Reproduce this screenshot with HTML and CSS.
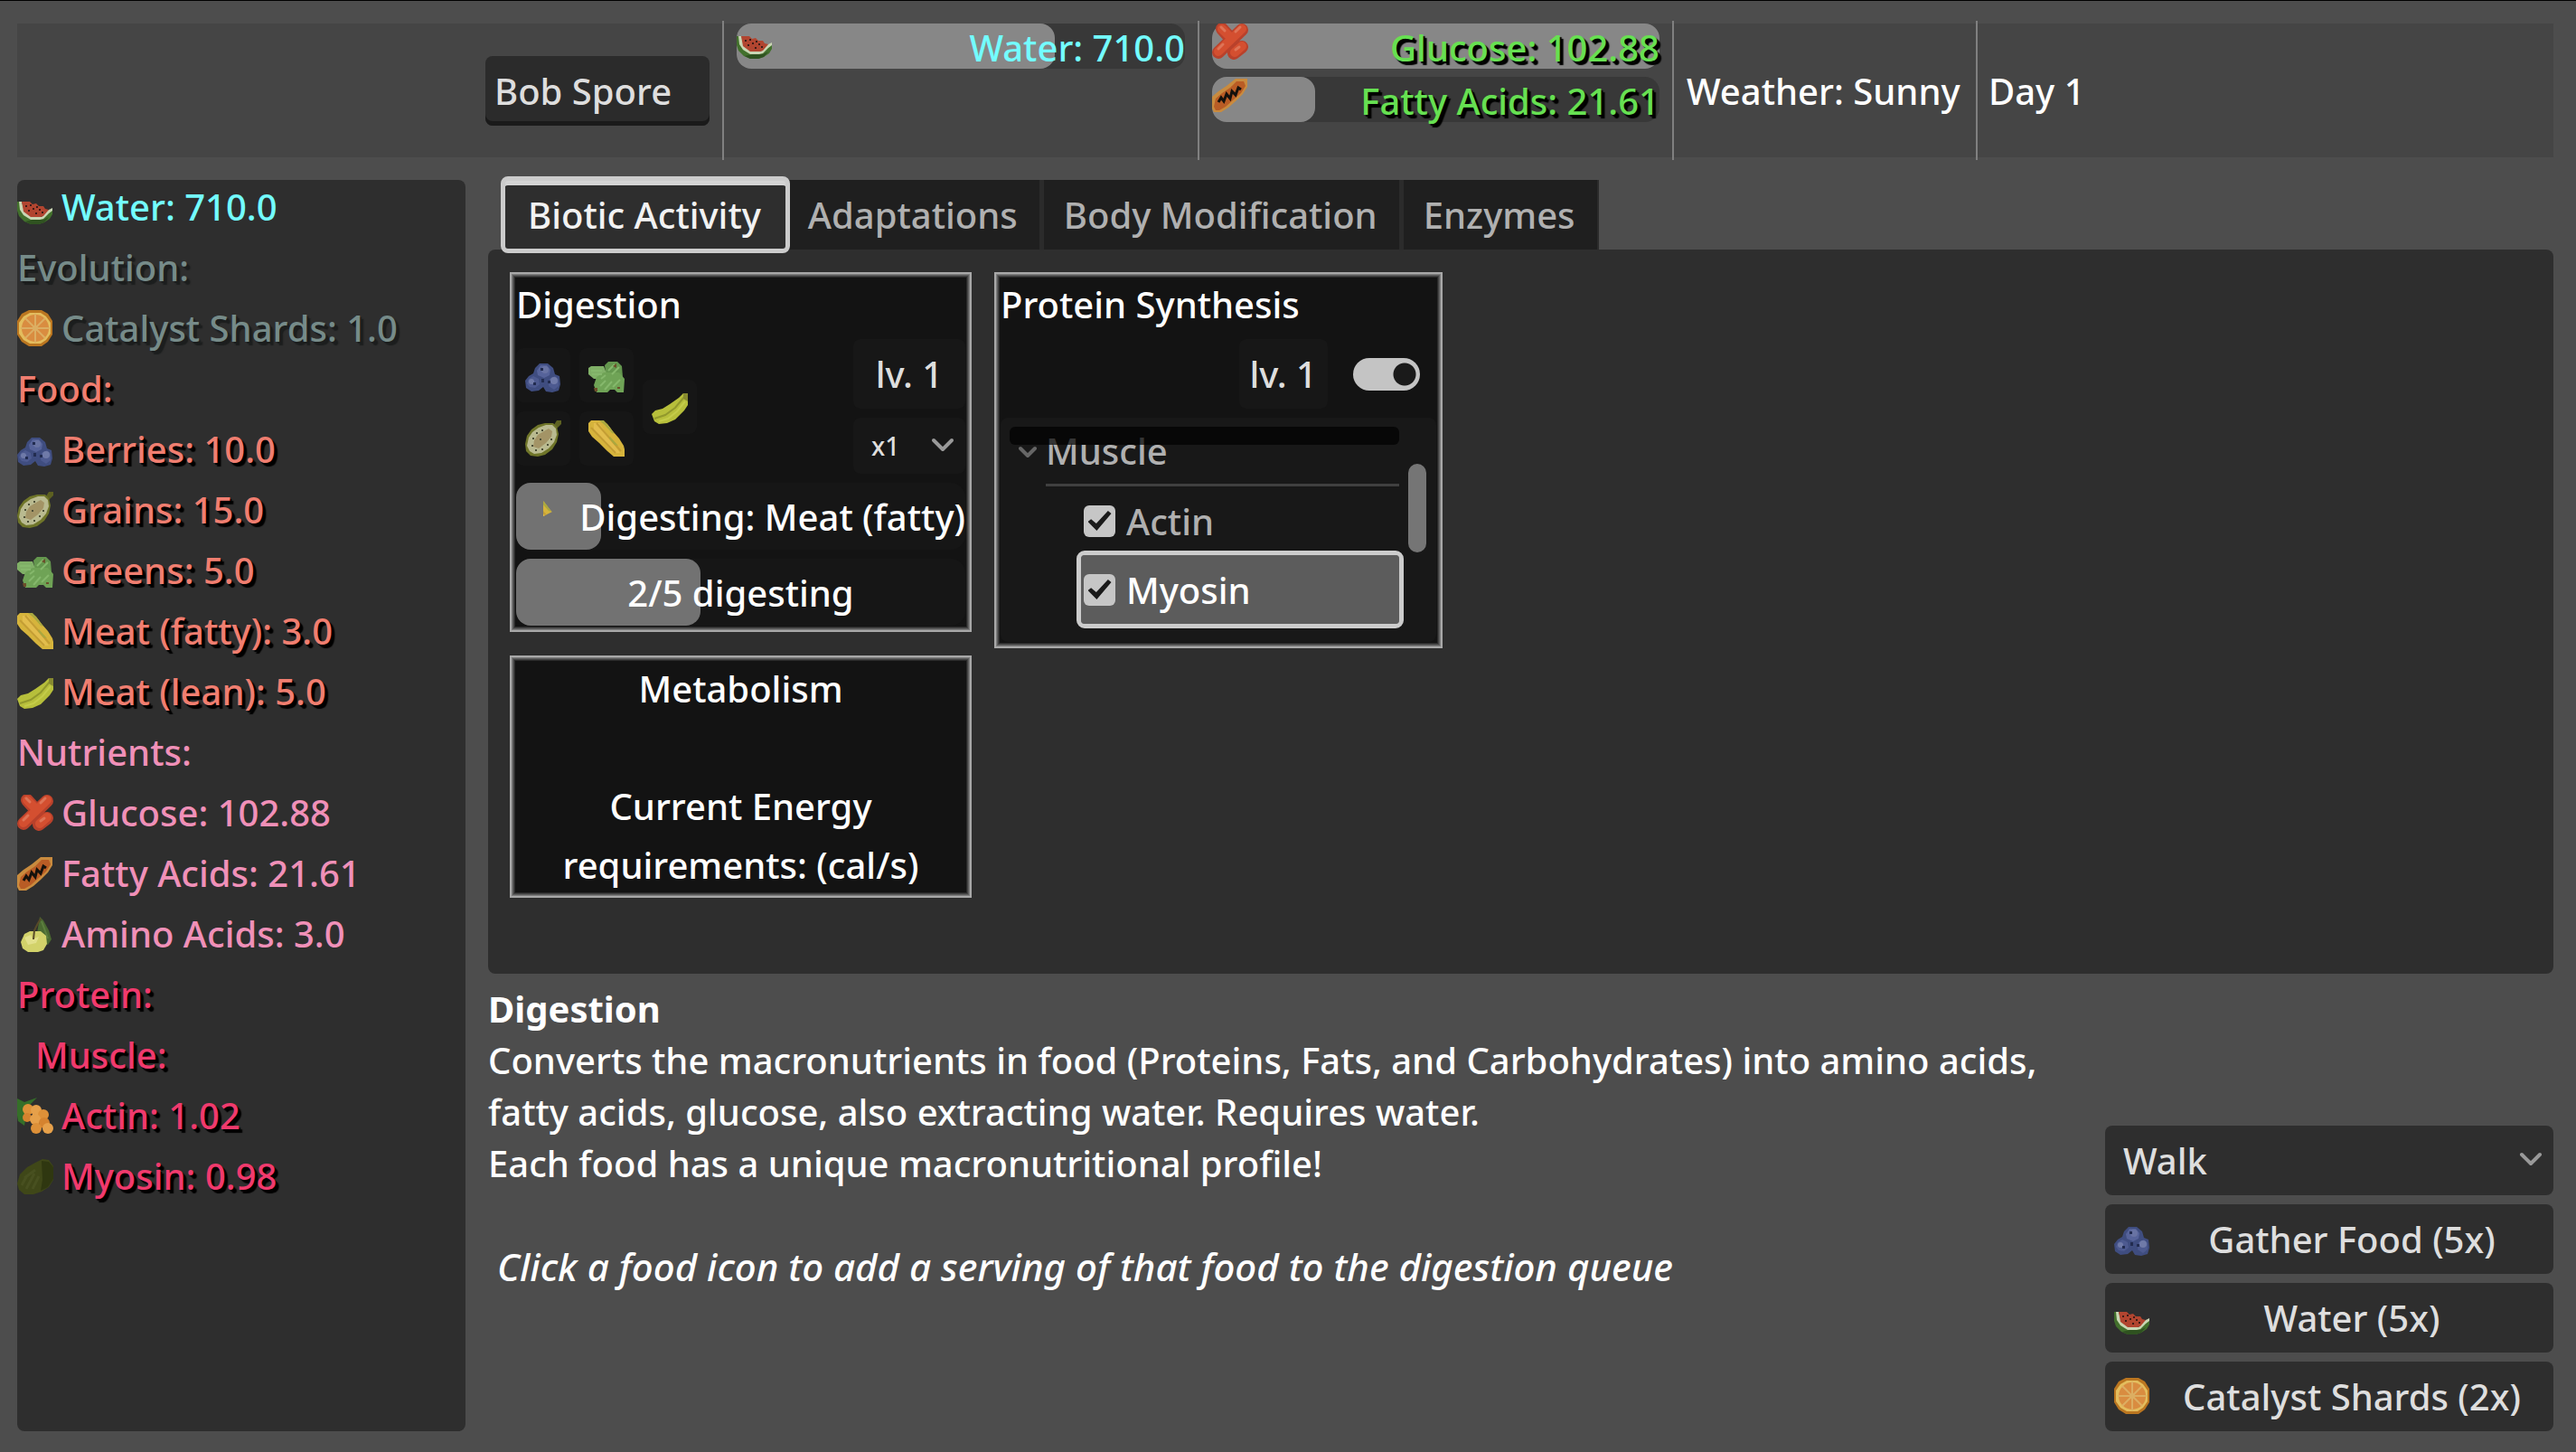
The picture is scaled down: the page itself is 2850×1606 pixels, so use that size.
FILE: index.html
```
<!DOCTYPE html>
<html lang="en">

<head>
    <meta charset="UTF-8">
    <meta name="viewport" content="width=device-width, initial-scale=1.0">
    <title>Bob Spore - Biotic Activity</title>
    <link rel="stylesheet" href="styles.css">
</head>

<body>
    <!-- Item icons -->
    <svg class="sprites" aria-hidden="true">
        <symbol id="icon-water" viewBox="0 0 40 40">
            <path d="M0 14h4l2 12 8 7h13l7-8 5-2v5l-3 5-6 4-6 2H15l-7-3-6-6-2-6z" fill="#42702c" />
            <path d="M9 36l8-2h12l6-3-5 6-6 2H15z" fill="#2f5220" />
            <path d="M2 14h3l3 11 8 6h11l6-7 6-3v3l-4 3-6 6-4 1H15l-8-5-4-6z" fill="#c9d6b4" />
            <path d="M5 14h9l3 3 4-1 3 3h5l2 3 4 1-6 7-3 1H15l-8-6z" fill="#b14530" />
            <path d="M9 18h2v2H9zM14 17h2v2h-2zM12 23h2v2h-2zM17 21h2v2h-2zM20 26h2v2h-2zM24 22h2v2h-2zM27 25h2v2h-2zM21 19h2v2h-2z" fill="#3d1c17" />
        </symbol>
        <symbol id="icon-shard" viewBox="0 0 40 40">
            <path d="M13 0h14l7 4 5 8v15l-5 8-7 5H13l-8-5-5-8V12l5-8z" fill="#bb7620" />
            <path d="M14 3h12l6 4 5 7v12l-5 7-6 4H14l-7-4-5-7V14l5-7z" fill="#e3bd5e" />
            <circle cx="20" cy="20" r="15" fill="#d98c40" />
            <path d="M20 4v32M4 20h32M9 9l22 22M31 9L9 31" stroke="#dcae62" stroke-width="2" />
            <circle cx="20" cy="20" r="3" fill="#dcae62" />
        </symbol>
        <symbol id="icon-berries" viewBox="0 0 40 40">
            <path d="M16 7h9l6 5 2 7 5 2 1 9-2 7-7 2-7-1-3-5-5 4-8 1-6-4-1-8 4-5 5-3 2-6z" fill="#3f4d80" />
            <path d="M17 9h7l4 5-1 6-6 3-7-3-1-5z" fill="#56639a" />
            <path d="M4 24l5-3 6 3 1 6-5 4-6-1-3-4zM27 24l6-3 4 4v7l-5 4-6-4z" fill="#4d5a90" />
            <circle cx="22" cy="14" r="4" fill="#6873a3" />
            <circle cx="7" cy="27" r="3" fill="#6f7aa8" />
            <circle cx="32" cy="26" r="4" fill="#6f7aa8" />
            <path d="M17 12h3v3h-3zM9 28h3v3H9zM25 26h3v3h-3zM18 24h3v4h-3z" fill="#222c50" />
        </symbol>
        <symbol id="icon-grains" viewBox="0 0 40 40">
            <path d="M30 8l5-8h5v4l-6 6z" fill="#5d6121" />
            <path d="M14 5l8-2h9l4 4 2 8-2 9-5 8-8 6-8 2-8-1-5-5-1-8 2-9 5-7z" fill="#6f7529" />
            <path d="M15 8l8-3h7l4 4 1 7-3 8-6 7-8 5-8 1-5-3-3-6 2-9 4-6z" fill="#b9ba90" />
            <path d="M19 13l7-4 4 3-1 6-6 7-8 6-6-2 1-7 4-6z" fill="#a39466" />
            <path d="M12 13h2v2h-2zM18 10h2v2h-2zM8 19h2v2H8zM7 27h2v2H7zM11 32h2v2h-2zM18 31h2v2h-2zM24 26h2v2h-2zM28 20h2v2h-2zM16 20h2v2h-2z" fill="#4e5038" />
        </symbol>
        <symbol id="icon-greens" viewBox="0 0 40 40">
            <path d="M18 9l4-4h10l5 5 1 12-5 3H20z" fill="#64974e" />
            <path d="M0 12l3-2h14l3 8-4 6H6l-6-5z" fill="#80b067" />
            <path d="M9 22l8-5h17l6 7-1 15h-7l-3-3h-5l-3 3H9l-3-8z" fill="#6fa356" />
            <path d="M3 15h12M4 19h11M13 32l6-6M18 36l8-9M27 33l8-8M22 15l7-7M26 19l8-8M14 24l5-4" stroke="#85b86c" stroke-width="2" />
            <path d="M27 10l4-3v5zM6 34h4v4H7zM32 33h3v2h-3z" fill="#6c4f2b" />
        </symbol>
        <symbol id="icon-fatty" viewBox="0 0 40 40">
            <path d="M3 0h13l5 4 6 8 7 8 5 8 1 4v8H28l-7-6-9-9-8-7-4-6V3z" fill="#d6b43c" />
            <path d="M6 3h6l23 33h-7L6 12z" fill="#e2bd4d" />
            <path d="M3 8l27 28M9 3l27 31" stroke="#c49e34" stroke-width="2" />
            <path d="M12 0h5l7 8 5 7-3-1-8-9zM24 18l9 10-4-1-6-7z" fill="#a9a83f" />
        </symbol>
        <symbol id="icon-lean" viewBox="0 0 40 40">
            <path d="M0 28l4-4 8-2 8-5 10-7 5-5h5v13l-4 6-10 10-9 4-9 1-5-3z" fill="#b7bf3b" />
            <path d="M3 33l12-4 11-8 10-12" stroke="#92992c" stroke-width="2" fill="none" />
            <path d="M8 36l10-3 10-8 9-11" stroke="#c4cc4a" stroke-width="2" fill="none" />
            <path d="M35 5h5v9l-5-3z" fill="#878a30" />
        </symbol>
        <symbol id="icon-glucose" viewBox="0 0 40 40">
            <path d="M11 6l10 11M33 7L7 32M24 33l9-7" stroke="#b9412b" stroke-width="14" stroke-linecap="round" />
            <path d="M11 6l10 10M33 6L7 31M25 32l8-7" stroke="#d44f30" stroke-width="10" stroke-linecap="round" />
            <path d="M10 4l4 4M31 4l-5 5M7 28l5-5M26 29l4-3" stroke="#de7457" stroke-width="3" stroke-linecap="round" />
        </symbol>
        <symbol id="icon-acids" viewBox="0 0 40 40">
            <path d="M26 2h13v9l-5 8-8 8-8 7-8 5H2l-2-4V22l7-6 9-6z" fill="#c98b3e" />
            <path d="M27 5h8l2 5-5 8-8 7-9 8-7 4H4l-2-4 2-9 7-6 9-6z" fill="#b95c25" />
            <path d="M7 28l3-5 3 4 3-8 4 5 2-8 4 4 3-8 3 2" stroke="#15110c" stroke-width="3" fill="none" />
        </symbol>
        <symbol id="icon-amino" viewBox="0 0 40 40">
            <path d="M25 1l4 4 6 11 3 10-4 6-7-3-5-10z" fill="#4a6931" />
            <path d="M27 6l7 19" stroke="#5d7f3f" stroke-width="2" />
            <path d="M8 20l6-3h12l6 5 1 9-4 7-6 2H12l-6-4-2-7z" fill="#d2d26a" />
            <path d="M8 24l7-3 2 5 7-3-3 7-9 2z" fill="#e2e08b" />
            <path d="M18 26l1-10 3-6 4-7" stroke="#584a28" stroke-width="2" fill="none" />
        </symbol>
        <symbol id="icon-actin" viewBox="0 0 40 40">
            <path d="M0 1l8 4 14-5-8 8 4 6-8 5-2 12-7-5-1-6z" fill="#356f29" />
            <circle cx="12" cy="13" r="6" fill="#de9138" />
            <circle cx="21" cy="14" r="6" fill="#e6a04a" />
            <circle cx="11" cy="22" r="5" fill="#d5832f" />
            <circle cx="29" cy="19" r="6" fill="#dd9038" />
            <circle cx="20" cy="24" r="6" fill="#e6a04a" />
            <circle cx="30" cy="28" r="6" fill="#d5832f" />
            <circle cx="21" cy="34" r="6" fill="#dd9038" />
            <circle cx="34" cy="34" r="6" fill="#e6a04a" />
        </symbol>
        <symbol id="icon-myosin" viewBox="0 0 40 40">
            <path d="M11 10l9-5 8-4 7 1 5 7v15l-5 8-8 5-9 3H8l-6-5-2-7 3-10z" fill="#3f4718" />
            <path d="M27 3l8 1 5 6v13l-6 9-8 4 2-12z" fill="#2f3710" />
            <path d="M5 30l6-11M10 34l9-17M17 34l7-14M8 22l12-9" stroke="#485020" stroke-width="3" />
        </symbol>
    </svg>

    <!-- Status bar -->
    <header class="status">
        <div class="status-cell status-name">
            <input type="text" class="name-input" value="Bob Spore" aria-label="Name">
        </div>
        <div class="status-cell status-bars">
            <div class="meter water">
                <div class="meter-fill" style="width: 71%"></div>
                <svg class="icon"><use href="#icon-water" /></svg>
                <span class="meter-text">Water: 710.0</span>
            </div>
        </div>
        <div class="status-cell status-bars">
            <div class="meter energy">
                <div class="meter-fill" style="width: 100%"></div>
                <svg class="icon"><use href="#icon-glucose" /></svg>
                <span class="meter-text">Glucose: 102.88</span>
            </div>
            <div class="meter energy">
                <div class="meter-fill" style="width: 23%"></div>
                <svg class="icon"><use href="#icon-acids" /></svg>
                <span class="meter-text">Fatty Acids: 21.61</span>
            </div>
        </div>
        <div class="status-cell status-text">Weather: Sunny</div>
        <div class="status-cell status-text status-day">Day 1</div>
    </header>

    <div class="game">
        <!-- Inventory -->
        <aside class="inventory">
            <div class="item water"><svg class="icon"><use href="#icon-water" /></svg>Water: 710.0</div>
            <div class="item evolution">Evolution:</div>
            <div class="item evolution"><svg class="icon"><use href="#icon-shard" /></svg>Catalyst Shards: 1.0</div>
            <div class="item food">Food:</div>
            <div class="item food"><svg class="icon"><use href="#icon-berries" /></svg>Berries: 10.0</div>
            <div class="item food"><svg class="icon"><use href="#icon-grains" /></svg>Grains: 15.0</div>
            <div class="item food"><svg class="icon"><use href="#icon-greens" /></svg>Greens: 5.0</div>
            <div class="item food"><svg class="icon"><use href="#icon-fatty" /></svg>Meat (fatty): 3.0</div>
            <div class="item food"><svg class="icon"><use href="#icon-lean" /></svg>Meat (lean): 5.0</div>
            <div class="item nutrient">Nutrients:</div>
            <div class="item nutrient"><svg class="icon"><use href="#icon-glucose" /></svg>Glucose: 102.88</div>
            <div class="item nutrient"><svg class="icon"><use href="#icon-acids" /></svg>Fatty Acids: 21.61</div>
            <div class="item nutrient"><svg class="icon"><use href="#icon-amino" /></svg>Amino Acids: 3.0</div>
            <div class="item protein">Protein:</div>
            <div class="item protein item-sub">Muscle:</div>
            <div class="item protein"><svg class="icon"><use href="#icon-actin" /></svg>Actin: 1.02</div>
            <div class="item protein"><svg class="icon"><use href="#icon-myosin" /></svg>Myosin: 0.98</div>
        </aside>

        <main class="main">
            <nav class="tabs">
                <button type="button" class="tab active">Biotic Activity</button>
                <button type="button" class="tab">Adaptations</button>
                <button type="button" class="tab">Body Modification</button>
                <button type="button" class="tab">Enzymes</button>
            </nav>

            <section class="panel">
                <div class="column column-wide">
                    <!-- Digestion -->
                    <div class="card">
                        <h2 class="card-title">Digestion</h2>
                        <div class="digestion-controls">
                            <div class="foods">
                                <div class="food-stack">
                                    <button type="button" class="food-button" aria-label="Berries"><svg class="icon"><use href="#icon-berries" /></svg></button>
                                    <button type="button" class="food-button" aria-label="Grains"><svg class="icon"><use href="#icon-grains" /></svg></button>
                                </div>
                                <div class="food-stack">
                                    <button type="button" class="food-button" aria-label="Greens"><svg class="icon"><use href="#icon-greens" /></svg></button>
                                    <button type="button" class="food-button" aria-label="Meat (fatty)"><svg class="icon"><use href="#icon-fatty" /></svg></button>
                                </div>
                                <div class="food-stack">
                                    <button type="button" class="food-button" aria-label="Meat (lean)"><svg class="icon"><use href="#icon-lean" /></svg></button>
                                </div>
                            </div>
                            <div class="digestion-level">
                                <button type="button" class="level">lv. 1</button>
                                <div class="select-wrap">
                                    <select class="amount" aria-label="Servings">
                                        <option>x1</option>
                                    </select>
                                    <svg class="chevron" viewBox="0 0 26 16"><path d="M3 3l10 10L23 3" /></svg>
                                </div>
                            </div>
                        </div>
                        <div class="progress">
                            <div class="progress-fill" style="width: 19%"></div>
                            <svg class="icon icon-partial"><use href="#icon-fatty" /></svg>
                            <span class="progress-text progress-right">Digesting: Meat (fatty)</span>
                        </div>
                        <div class="progress">
                            <div class="progress-fill" style="width: 41%"></div>
                            <span class="progress-text">2/5 digesting</span>
                        </div>
                    </div>

                    <!-- Metabolism -->
                    <div class="card metabolism">
                        <h2 class="metabolism-title">Metabolism</h2>
                        <p class="metabolism-text">Current Energy requirements: (cal/s)</p>
                    </div>
                </div>

                <div class="column">
                    <!-- Protein synthesis -->
                    <div class="card">
                        <h2 class="card-title">Protein Synthesis</h2>
                        <div class="synthesis-controls">
                            <button type="button" class="level">lv. 1</button>
                            <input type="checkbox" role="switch" class="switch" aria-label="Protein Synthesis" checked>
                        </div>
                        <div class="tree">
                            <div class="tree-list">
                                <div class="tree-row tree-group">
                                    <svg class="tree-arrow" viewBox="0 0 20 14"><path d="M2 3l8 8 8-8" /></svg>
                                    <span class="tree-heading">Muscle</span>
                                </div>
                                <label class="tree-row tree-item"><input type="checkbox" class="check" checked>Actin</label>
                                <label class="tree-row tree-item selected"><input type="checkbox" class="check" checked>Myosin</label>
                                <div class="tree-header"></div>
                            </div>
                            <div class="scrollbar"><div class="scrollbar-thumb"></div></div>
                        </div>
                    </div>
                </div>
            </section>

            <section class="footer">
                <div class="description">
                    <h3 class="description-title">Digestion</h3>
                    <p>Converts the macronutrients in food (Proteins, Fats, and Carbohydrates) into amino acids, fatty acids, glucose, also extracting water. Requires water.</p>
                    <p>Each food has a unique macronutritional profile!</p>
                    <p class="hint">Click a food icon to add a serving of that food to the digestion queue</p>
                </div>

                <div class="actions">
                    <div class="select-wrap">
                        <select class="action action-select" aria-label="Action">
                            <option>Walk</option>
                        </select>
                        <svg class="chevron" viewBox="0 0 26 16"><path d="M3 3l10 10L23 3" /></svg>
                    </div>
                    <button type="button" class="action"><svg class="icon"><use href="#icon-berries" /></svg><span class="action-text">Gather Food (5x)</span></button>
                    <button type="button" class="action"><svg class="icon"><use href="#icon-water" /></svg><span class="action-text">Water (5x)</span></button>
                    <button type="button" class="action"><svg class="icon"><use href="#icon-shard" /></svg><span class="action-text">Catalyst Shards (2x)</span></button>
                </div>
            </section>
        </main>
    </div>
</body>

</html>
```
FILE: styles.css
```
* {
    box-sizing: border-box;
}

body {
    display: flex;
    flex-direction: column;
    gap: 25px;
    min-height: 100vh;
    margin: 0;
    padding: 25px 25px 23px 19px;
    border-top: 1px solid #000;
    background-color: #4d4d4d;
    color: #fff;
    font-family: "Noto Sans", "Open Sans", sans-serif;
    font-size: 40px;
    font-weight: 500;
    line-height: 55px;
}

h2,
h3,
p {
    margin: 0;
    font-size: inherit;
    font-weight: inherit;
}

button,
input,
select {
    margin: 0;
    padding: 0;
    border: none;
    background: none;
    color: #dedede;
    font: inherit;
    appearance: none;
}

.sprites {
    position: absolute;
    width: 0;
    height: 0;
}

.icon {
    flex: none;
    width: 40px;
    height: 40px;
}

/* Status bar */
.status {
    display: grid;
    grid-template-columns: 780fr 526fr 525fr 336fr 639fr;
    height: 148px;
    background-color: #454545;
}

.status-cell {
    display: flex;
    margin: -3px 0;
    padding: 3px 14px;
    border-left: 2px solid #808080;
}

.status-name {
    align-items: center;
    justify-content: flex-end;
    border-left: none;
}

.status-bars {
    flex-direction: column;
    gap: 9px;
}

.status-text {
    align-items: center;
}

.status-day {
    padding-left: 12px;
}

.name-input {
    width: 248px;
    height: 77px;
    padding: 0 10px;
    border-radius: 8px;
    background-color: #2b2b2b;
    box-shadow: inset 0 -5px #1a1a1a;
}

/* Meters */
.meter {
    position: relative;
    display: flex;
    height: 50px;
    border-radius: 16px;
    background-color: #383838;
}

.meter-fill {
    position: absolute;
    top: 0;
    bottom: 0;
    left: 0;
    border-radius: 16px;
    background-color: #878787;
}

.meter .icon,
.meter-text {
    position: relative;
}

.meter-text {
    flex: 1;
    line-height: 54px;
    text-align: right;
    white-space: nowrap;
}

.water {
    color: #73fcff;
}

.energy {
    color: #66e052;
    text-shadow: 4px 4px 1px #000, 2px 2px 1px #000;
}

/* Layout */
.game {
    flex: 1;
    display: flex;
    gap: 25px;
}

.main {
    flex: 1;
    min-width: 0;
    display: grid;
    grid-template-rows: 77px 800fr 506fr;
}

/* Inventory */
.inventory {
    width: 496px;
    display: flex;
    flex-direction: column;
    gap: 12px;
    padding-top: 2px;
    border-radius: 8px;
    background-color: #2e2e2e;
}

.item {
    display: flex;
    align-items: center;
    gap: 9px;
}

.item-sub {
    padding-left: 20px;
}

.evolution {
    color: #768b89;
    text-shadow: 4px 4px 1px #1c1e1e, 2px 2px 1px #1c1e1e;
}

.food {
    color: #f07e70;
    text-shadow: 4px 4px 1px #000, 2px 2px 1px #000;
}

.nutrient {
    color: #f090b8;
}

.protein {
    color: #f03a6d;
    text-shadow: 4px 4px 1px #000, 2px 2px 1px #000;
}

/* Tabs */
.tabs {
    display: flex;
    padding-left: 18px;
}

.tab {
    padding: 0 24px 0 22px;
    border-right: 5px solid #2b2b2b;
    background-color: #1f1f1f;
    color: #b0b0b0;
}

.tab:last-child {
    border-right-width: 2px;
}

.tab.active {
    position: relative;
    z-index: 1;
    margin-right: 2px;
    padding: 0 28px 0 26px;
    border-right: none;
    border-radius: 4px;
    outline: 5px solid #ccc;
    outline-offset: -1px;
    background-color: #2e2e2e;
    box-shadow: inset 0 6px #d4d4d4;
    color: #f2f2f2;
}

.panel {
    display: flex;
    align-items: flex-start;
    gap: 25px;
    padding: 25px 24px;
    border-radius: 8px;
    background-color: #2e2e2e;
}

/* Cards */
.column {
    display: flex;
    flex-direction: column;
    gap: 26px;
    width: 496px;
}

.column-wide {
    width: 511px;
}

.card {
    display: flex;
    flex-direction: column;
    gap: 10px;
    padding: 5px;
    border: 2px solid #a8a8a8;
    background-color: #131313;
    box-shadow: inset 0 0 0 1px #7d7d7d, inset 0 0 0 2px #5e5e5e, inset 0 0 0 3px #444, inset 0 0 0 4px #2a2a2a;
}

.card-title {
    line-height: 57px;
}

.level {
    height: 77px;
    padding: 0 12px;
    border-radius: 8px;
    background-color: #171717;
}

.digestion-controls {
    display: flex;
    align-items: center;
    justify-content: space-between;
}

.foods {
    display: flex;
    align-items: center;
    gap: 10px;
}

.food-stack {
    display: flex;
    flex-direction: column;
    gap: 10px;
}

.food-button {
    display: flex;
    align-items: center;
    justify-content: center;
    width: 60px;
    height: 60px;
    border-radius: 8px;
    background-color: #161616;
}

.digestion-level {
    display: flex;
    flex-direction: column;
    gap: 10px;
    width: 124px;
}

.select-wrap {
    position: relative;
    display: flex;
}

.chevron {
    position: absolute;
    top: 50%;
    right: 12px;
    width: 26px;
    height: 16px;
    margin-top: -9px;
    pointer-events: none;
}

.chevron path,
.tree-arrow path {
    fill: none;
    stroke: #999;
    stroke-width: 4px;
    stroke-linecap: round;
    stroke-linejoin: round;
}

.amount {
    width: 100%;
    height: 62px;
    padding-left: 20px;
    border-radius: 8px;
    background-color: #171717;
    font-size: 28px;
}

.progress {
    position: relative;
    display: flex;
    align-items: center;
    height: 74px;
    border-radius: 16px;
    background-color: #161616;
}

.progress-fill {
    position: absolute;
    top: 0;
    bottom: 0;
    left: 0;
    border-radius: 16px;
    background-color: #727272;
}

.progress-text {
    position: relative;
    flex: 1;
    text-align: center;
    white-space: nowrap;
}

.progress-right {
    text-align: right;
}

/* Radial reveal of the food being digested */
.icon-partial {
    position: relative;
    margin-left: 10px;
    clip-path: polygon(50% 0, 50% 50%, 100% 25%, 100% 0);
}

.metabolism {
    gap: 65px;
    padding: 2px;
    line-height: 65px;
    text-align: center;
}

.metabolism-text {
    padding: 0 40px;
}

/* Protein synthesis */
.synthesis-controls {
    display: flex;
    align-items: center;
    justify-content: flex-end;
    gap: 28px;
    padding-right: 18px;
}

.switch {
    width: 74px;
    height: 36px;
    border-radius: 18px;
    background: radial-gradient(circle at 57px 18px, #1a1a1a 12px, #c4c4c4 13px);
}

.tree {
    display: flex;
    gap: 10px;
    height: 248px;
    padding-right: 11px;
    overflow: hidden;
    border-radius: 8px;
    background-color: #181818;
}

.tree-list {
    position: relative;
    flex: 1;
}

.tree-row {
    display: flex;
    align-items: center;
    height: 76px;
}

.tree-group {
    gap: 10px;
    padding-left: 20px;
    color: #b0b0b0;
}

.tree-arrow {
    width: 20px;
    height: 14px;
}

.tree-arrow path {
    stroke: #666;
}

.tree-heading {
    flex: 1;
    border-bottom: 3px solid #404040;
    line-height: 73px;
}

.tree-item {
    gap: 12px;
    margin-left: 89px;
    padding-left: 3px;
    color: #b0b0b0;
}

.tree-item.selected {
    border-radius: 4px;
    outline: 5px solid #ccc;
    background-color: #5c5c5c;
    color: #fff;
}

/* Header strip lies over the scrolled rows */
.tree-header {
    position: absolute;
    top: 10px;
    left: 10px;
    right: 0;
    height: 20px;
    border-radius: 6px;
    background-color: rgba(0, 0, 0, 0.7);
}

.check {
    display: flex;
    align-items: center;
    justify-content: center;
    width: 35px;
    height: 35px;
    border-radius: 6px;
    background-color: #c6c6c6;
}

.check:checked::before {
    content: "";
    width: 26px;
    height: 22px;
    background-color: #1a1a1a;
    clip-path: polygon(0 55%, 14% 42%, 36% 64%, 86% 0, 100% 14%, 38% 100%);
}

.scrollbar {
    width: 20px;
    padding-top: 51px;
}

.scrollbar-thumb {
    height: 98px;
    border-radius: 10px;
    background-color: #757575;
}

/* Description and actions */
.footer {
    display: flex;
    gap: 12px;
    padding-top: 10px;
}

.description {
    flex: 1;
    line-height: 57px;
}

.description-title {
    font-weight: 700;
}

.hint {
    margin-top: 57px;
    padding-left: 10px;
    font-size: 42px;
    font-style: italic;
}

.actions {
    align-self: flex-end;
    display: flex;
    flex-direction: column;
    gap: 10px;
    width: 496px;
}

.action {
    display: flex;
    align-items: center;
    gap: 10px;
    width: 100%;
    height: 77px;
    padding: 0 10px;
    border-radius: 8px;
    background-color: #2e2e2e;
}

.action-select {
    padding-left: 20px;
}

.action-text {
    flex: 1;
    text-align: center;
}
```
